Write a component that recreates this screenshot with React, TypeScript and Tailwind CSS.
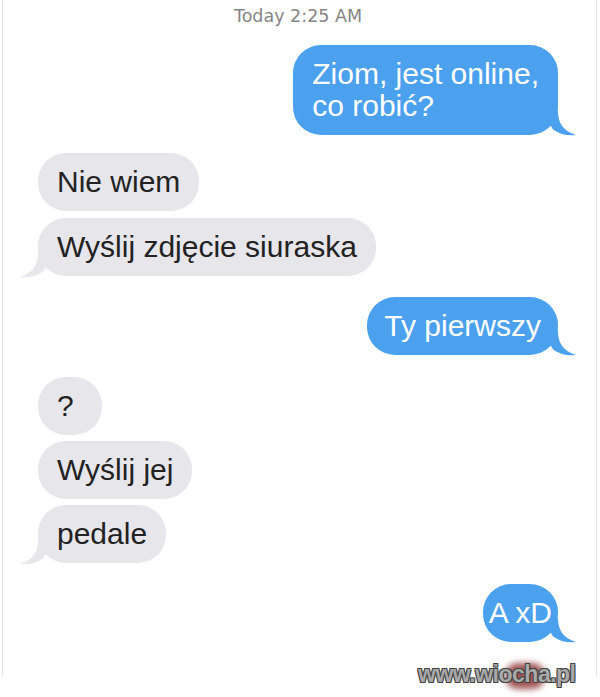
import React from "react";

type Msg = {
  lines: string[];
  me: boolean;
  tail?: boolean;
  gap: string;
  pad?: string;
};

const messages: Msg[] = [
  { lines: ["Ziom, jest online,", "co robić?"], me: true, tail: true, gap: "mt-[19px]" },
  { lines: ["Nie wiem"], me: false, gap: "mt-[18px]" },
  { lines: ["Wyślij zdjęcie siuraska"], me: false, tail: true, gap: "mt-[7px]" },
  { lines: ["Ty pierwszy"], me: true, tail: true, gap: "mt-[21px]", pad: "px-[17px]" },
  { lines: ["?"], me: false, gap: "mt-[22px]" },
  { lines: ["Wyślij jej"], me: false, gap: "mt-[6px]" },
  { lines: ["pedale"], me: false, tail: true, gap: "mt-[6px]" },
  { lines: ["A xD"], me: true, tail: true, gap: "mt-[21px]", pad: "px-[6px] text-center" },
];

const Tail = ({ me }: { me: boolean }) => (
  <svg
    width="40"
    height="25"
    viewBox="0 0 40 25"
    className={
      me
        ? "absolute -right-5 -bottom-[1px] fill-[#4ba1ee]"
        : "absolute -left-5 -bottom-[2px] -scale-x-100 fill-[#e6e6eb]"
    }
  >
    <path d="M12 0 L20 0 C20 12 25 20 38 24 C30 25 22 23.5 15 18.5 L10 10 Z" />
  </svg>
);

const Bubble = ({ msg }: { msg: Msg }) => (
  <div
    className={`relative ${msg.gap} ${
      msg.me
        ? "self-end bg-[#4ba1ee] text-white"
        : "self-start bg-[#e6e6eb] text-[#222222]"
    } ${msg.pad ?? "px-[19px]"} min-w-[64px] rounded-[28px] py-[13px] text-[30px] leading-[32px]`}
  >
    {msg.tail && <Tail me={msg.me} />}
    <span className="relative">
      {msg.lines.map((l, i) => (
        <React.Fragment key={i}>
          {i > 0 && <br />}
          {l}
        </React.Fragment>
      ))}
    </span>
  </div>
);

export default function App() {
  return (
    <div className="relative w-[600px] h-[697px] overflow-hidden bg-white font-['Liberation_Sans',Arial,sans-serif]">
      <div className="ml-[2px] w-[595px] h-[676px] border-x border-[#e2e2e2] flex flex-col pl-[35px] pr-[38px]">
        {/* timestamp */}
        <div className="pt-[6px] text-center text-[17.5px] leading-[20px] text-[#858585] font-['DejaVu_Sans',Verdana,sans-serif]">
          Today 2:25 AM
        </div>

        {messages.map((m, i) => (
          <Bubble key={i} msg={m} />
        ))}
      </div>

      {/* watermark */}
      <div className="absolute left-[505px] top-[663px] w-[40px] h-[26px] rounded-full bg-[#8a2b2b] opacity-80 blur-[3px]" />
      <div className="absolute left-[418px] top-[660px] text-[23px] font-bold leading-[28px] tracking-[-0.5px] text-[#a9a9a9] [text-shadow:-1px_-1px_0_#444,1px_-1px_0_#444,-1px_1px_0_#444,1px_1px_0_#444]">
        www.wiocha.pl
      </div>
    </div>
  );
}
